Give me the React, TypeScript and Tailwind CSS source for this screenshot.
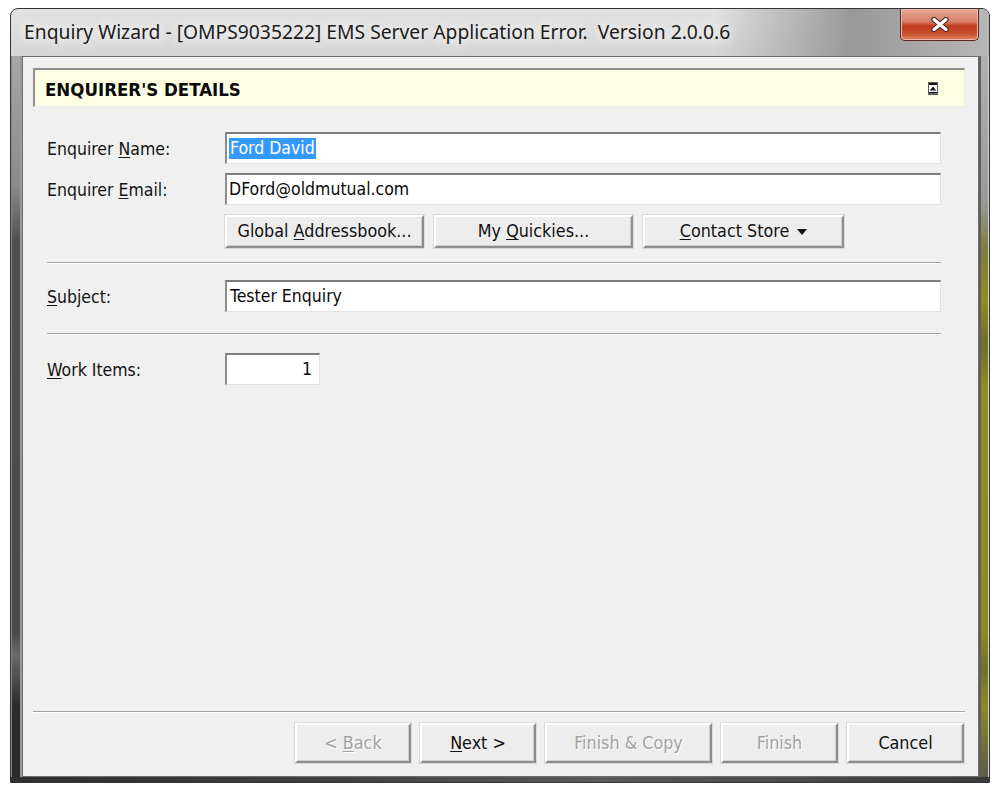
import type { ReactNode } from "react";

const ui = "font-['DejaVu_Sans_Condensed','DejaVu_Sans',sans-serif]";

// underlined access-key letter
const Key = ({ children }: { children: ReactNode }) => (
  <span className="underline underline-offset-[2px] decoration-1">{children}</span>
);

const TextBox = ({
  children,
  className = "",
}: {
  children?: ReactNode;
  className?: string;
}) => (
  <div
    className={`h-[32px] bg-white border-t-2 border-l-2 border-r border-b border-t-[#7c7c7c] border-l-[#8c8c8c] border-r-[#e2e2e2] border-b-[#e2e2e2] flex items-center text-[17.5px] text-[#0a0a0a] ${className}`}
  >
    {children}
  </div>
);

const RaisedButton = ({
  children,
  disabled,
  className = "",
}: {
  children: ReactNode;
  disabled?: boolean;
  className?: string;
}) => (
  <button
    type="button"
    className={`flex items-center justify-center bg-[#ededed] border-2 border-t-white border-l-white border-r-[#8e8e8e] border-b-[#8e8e8e] shadow-[inset_-1px_-1px_0_#cdcdcd,0_0_0_1px_#dadada] text-[17.8px] ${
      disabled
        ? "text-[#a2a2a2] [text-shadow:1px_1px_0_#ffffff]"
        : "text-[#111111]"
    } ${className}`}
  >
    {children}
  </button>
);

const Separator = ({ className = "" }: { className?: string }) => (
  <div className={`h-[2px] border-t border-b border-t-[#a3a3a3] border-b-white ${className}`} />
);

const EnquiryWizard = () => {
  return (
    <div className="w-[992px] h-[787px] bg-white pl-[10px] pt-[8px]">
      <div className="w-[980px] h-[775px] flex flex-col rounded-t-[8px] border border-[#343434] overflow-hidden bg-[linear-gradient(to_bottom,#e2e2e2,#c9c9c9_12%,#bdbdbd_60%,#b2b2b2)]">
        {/* Title bar */}
        <div className="h-[47px] flex items-start justify-between pl-[13px] pr-[10px] bg-[linear-gradient(to_right,transparent_72%,#999999_86%,#b6b6b6)]">
          <div className="mt-[10px] h-[26px] leading-[26px] whitespace-pre font-['Noto_Sans',sans-serif] text-[19.3px] text-[#1b1b1b] [text-shadow:0_0_8px_#ffffff,0_0_14px_#ffffff]">
            Enquiry Wizard - [OMPS9035222] EMS Server Application Error.  Version 2.0.0.6
          </div>
          <div className="w-[79px] h-[32px] flex items-center justify-center rounded-b-[5px] border border-t-0 border-[#5a2a22] bg-[linear-gradient(to_bottom,#e7a797,#d98068_40%,#c23b20_55%,#c9502f_80%,#e08a5f)] shadow-[inset_0_0_0_1px_#f0b8a8]">
            <svg width="18" height="15" viewBox="0 0 18 15">
              <path d="M3 2.5 L15 12.5 M15 2.5 L3 12.5" stroke="#4a2a24" strokeWidth="5.5" strokeLinecap="round" />
              <path d="M3 2.5 L15 12.5 M15 2.5 L3 12.5" stroke="#ffffff" strokeWidth="3.2" strokeLinecap="round" />
            </svg>
          </div>
        </div>

        <div className="flex flex-1">
          {/* Left frame */}
          <div className="w-[11px] bg-[linear-gradient(to_bottom,#a6a6a6,#8a8a8a_18%,#4e4e4e_26%,#4a4a4a_80%,#6a6a6a_83%,#2c2c2c_90%,#2a2a2a)] border-l border-l-[#8a8a8a] border-r-2 border-r-[#9a9a9a]" />

          {/* Client area */}
          <div className={`flex-1 flex flex-col bg-[#f0f0f0] border border-[#6e6e6e] ${ui}`}>
            {/* Section header */}
            <div className="mt-[11px] ml-[10px] mr-[13px] h-[39px] flex items-center justify-between bg-[#fdfde2] border-t-2 border-l-2 border-r border-b border-t-[#8e8e8e] border-l-[#8e8e8e] border-r-[#ebebeb] border-b-[#ebebeb] pl-[10px] pr-[26px]">
              <span className="pt-[3px] text-[18.5px] font-bold text-[#0a0a0a]">ENQUIRER'S DETAILS</span>
              <svg width="10" height="13" viewBox="0 0 10 13" className="mt-[1px]">
                <rect x="0.5" y="0.5" width="9" height="12" fill="#f4f4f4" stroke="#5c5c5c" />
                <rect x="1" y="1" width="8" height="2" fill="#111" />
                <path d="M5 4.5 L8.2 8.6 H1.8 Z" fill="#111" />
                <rect x="1" y="10" width="8" height="1.6" fill="#111" />
              </svg>
            </div>

            {/* Form */}
            <div className="flex flex-col pl-[24px] pr-[37px] text-[17.5px] text-[#141414]">
              <div className="mt-[25px] flex items-center">
                <span className="w-[178px] pt-[3px]">
                  Enquirer <Key>N</Key>ame:
                </span>
                <TextBox className="flex-1 pl-[2px]">
                  <span className="bg-[#3399ff] text-white leading-[21px] px-[1px]">Ford David</span>
                </TextBox>
              </div>

              <div className="mt-[9px] flex items-center">
                <span className="w-[178px] pt-[3px]">
                  Enquirer <Key>E</Key>mail:
                </span>
                <TextBox className="flex-1 pl-[2px]">DFord@oldmutual.com</TextBox>
              </div>

              <div className="mt-[10px] ml-[178px] flex gap-[10px]">
                <RaisedButton className="w-[199px] h-[33px]">
                  <span>
                    Global <Key>A</Key>ddressbook...
                  </span>
                </RaisedButton>
                <RaisedButton className="w-[199px] h-[33px]">
                  <span>
                    My <Key>Q</Key>uickies...
                  </span>
                </RaisedButton>
                <RaisedButton className="w-[201px] h-[33px] gap-[8px]">
                  <span>
                    <Key>C</Key>ontact Store
                  </span>
                  <svg width="10" height="6" viewBox="0 0 10 6">
                    <path d="M0 0 H10 L5 6 Z" fill="#111" />
                  </svg>
                </RaisedButton>
              </div>

              <Separator className="mt-[14px]" />

              <div className="mt-[16px] flex items-center">
                <span className="w-[178px] pt-[3px]">
                  <Key>S</Key>ubject:
                </span>
                <TextBox className="flex-1 pl-[3px]">Tester Enquiry</TextBox>
              </div>

              <Separator className="mt-[21px]" />

              <div className="mt-[18px] flex items-center">
                <span className="w-[178px] pt-[3px]">
                  <Key>W</Key>ork Items:
                </span>
                <TextBox className="w-[95px] justify-end pr-[7px]">1</TextBox>
              </div>
            </div>

            <div className="flex-1" />

            {/* Wizard navigation */}
            <Separator className="ml-[10px] mr-[13px]" />
            <div className="mt-[10px] mb-[13px] mr-[14px] flex justify-end gap-[9px]">
              <RaisedButton disabled className="w-[116px] h-[40px]">
                <span>
                  &lt; <Key>B</Key>ack
                </span>
              </RaisedButton>
              <RaisedButton className="w-[116px] h-[40px]">
                <span>
                  <Key>N</Key>ext &gt;
                </span>
              </RaisedButton>
              <RaisedButton disabled className="w-[167px] h-[40px]">
                Finish &amp; Copy
              </RaisedButton>
              <RaisedButton disabled className="w-[117px] h-[40px]">
                Finish
              </RaisedButton>
              <RaisedButton className="w-[117px] h-[40px]">Cancel</RaisedButton>
            </div>
          </div>

          {/* Right frame */}
          <div className="w-[10px] bg-[linear-gradient(to_bottom,#b0b0b0,#9a9a9a_20%,#7e7e3a_27%,#8c8d22_34%,#6f6f2a_40%,#8d8e22_46%,#8b8c20_80%,#70712a_85%,#8a8b26_90%,#5c5c44)] border-l-2 border-l-[#5e5e5e] border-r border-r-[#d0d0d0]" />
        </div>

        {/* Bottom frame */}
        <div className="h-[5px] bg-[linear-gradient(to_right,#2e2e2e,#3e3e3e_30%,#5a5a5a_60%,#3a3a3a)]" />
      </div>
    </div>
  );
};

export default EnquiryWizard;
